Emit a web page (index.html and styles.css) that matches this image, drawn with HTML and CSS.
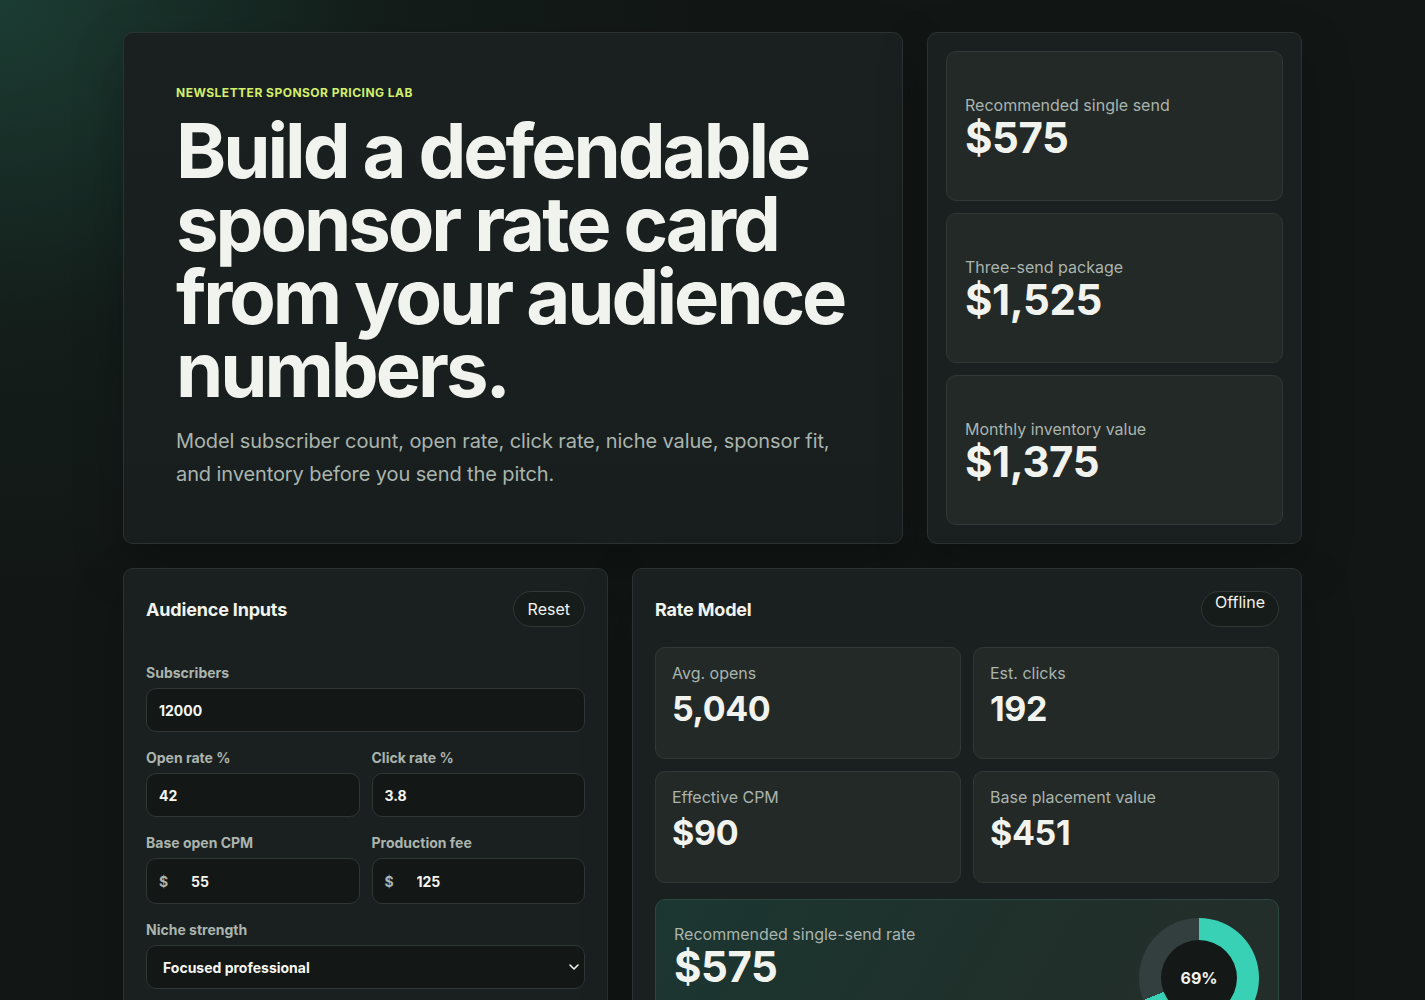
FILE: index.html
```html
<!DOCTYPE html>
<html lang="en">
<head>
<meta charset="utf-8">
<title>Newsletter Sponsor Pricing Lab</title>
<link rel="stylesheet" href="styles.css">
</head>
<body>
<main class="page">
  <section class="top-row">
    <div class="hero card">
      <p class="eyebrow">Newsletter Sponsor Pricing Lab</p>
      <h1 class="hero-title">Build a defendable sponsor rate card from your audience numbers.</h1>
      <p class="hero-copy">Model subscriber count, open rate, click rate, niche value, sponsor fit, and inventory before you send the pitch.</p>
    </div>
    <aside class="summary card">
      <div class="summary-item">
        <span class="summary-label">Recommended single send</span>
        <strong class="summary-value">$575</strong>
      </div>
      <div class="summary-item">
        <span class="summary-label">Three-send package</span>
        <strong class="summary-value">$1,525</strong>
      </div>
      <div class="summary-item">
        <span class="summary-label">Monthly inventory value</span>
        <strong class="summary-value">$1,375</strong>
      </div>
    </aside>
  </section>

  <section class="bottom-row">
    <div class="panel card">
      <div class="panel-head">
        <h2 class="panel-title">Audience Inputs</h2>
        <button class="pill" type="button">Reset</button>
      </div>
      <div class="form">
        <label class="field">
          <span class="field-label">Subscribers</span>
          <input class="input" type="text" value="12000">
        </label>
        <div class="field-row">
          <label class="field">
            <span class="field-label">Open rate %</span>
            <input class="input" type="text" value="42">
          </label>
          <label class="field">
            <span class="field-label">Click rate %</span>
            <input class="input" type="text" value="3.8">
          </label>
        </div>
        <div class="field-row">
          <label class="field">
            <span class="field-label">Base open CPM</span>
            <span class="input prefixed"><span class="prefix">$</span><input class="bare" type="text" value="55"></span>
          </label>
          <label class="field">
            <span class="field-label">Production fee</span>
            <span class="input prefixed"><span class="prefix">$</span><input class="bare" type="text" value="125"></span>
          </label>
        </div>
        <label class="field">
          <span class="field-label">Niche strength</span>
          <select class="input select">
            <option>Focused professional</option>
            <option>General interest</option>
            <option>High-intent B2B</option>
          </select>
        </label>
      </div>
    </div>

    <div class="panel card">
      <div class="panel-head">
        <h2 class="panel-title">Rate Model</h2>
        <span class="pill status">Offline</span>
      </div>
      <div class="metrics">
        <div class="metric">
          <span class="metric-label">Avg. opens</span>
          <strong class="metric-value">5,040</strong>
        </div>
        <div class="metric">
          <span class="metric-label">Est. clicks</span>
          <strong class="metric-value">192</strong>
        </div>
        <div class="metric">
          <span class="metric-label">Effective CPM</span>
          <strong class="metric-value">$90</strong>
        </div>
        <div class="metric">
          <span class="metric-label">Base placement value</span>
          <strong class="metric-value">$451</strong>
        </div>
      </div>
      <div class="result">
        <div class="result-text">
          <span class="result-label">Recommended single-send rate</span>
          <strong class="result-value">$575</strong>
          <p class="result-note">Focused professional audience with strong fit.</p>
        </div>
        <div class="donut" style="--pct: 69%">
          <span class="donut-label">69%</span>
        </div>
      </div>
    </div>
  </section>
</main>
</body>
</html>
```

FILE: styles.css
```css
* { box-sizing: border-box; }

html, body {
  margin: 0;
  min-height: 100%;
}

body {
  font-family: Inter, "Noto Sans", "Liberation Sans", sans-serif;
  color: #f1f3ee;
  background:
    radial-gradient(ellipse 700px 600px at 0 0, rgba(30, 70, 58, 0.8), rgba(22, 40, 35, 0.35) 55%, transparent 100%),
    #121715;
  background-color: #121715;
}

.page {
  width: 1179px;
  margin: 0 auto;
  padding: 32px 0 40px;
  display: flex;
  flex-direction: column;
  gap: 24px;
}

.card {
  background: #1a201f;
  border: 1px solid #2b3331;
  border-radius: 10px;
  box-shadow: 0 20px 50px rgba(0, 0, 0, 0.25);
}

.top-row {
  display: grid;
  grid-template-columns: minmax(0, 1fr) 375px;
  gap: 24px;
}

.hero {
  padding: 52px;
  background: linear-gradient(180deg, #1a201f 0%, #181e1d 100%);
}

.eyebrow {
  margin: 0 0 14px;
  font-size: 12px;
  font-weight: 700;
  letter-spacing: 0.04em;
  text-transform: uppercase;
  color: #d2ef6c;
}

.hero-title {
  margin: 0;
  font-size: 76px;
  line-height: 73px;
  font-weight: 700;
  letter-spacing: -0.04em;
  color: #f1f3ee;
}

.hero-copy {
  margin: 19px 0 0;
  font-size: 20px;
  line-height: 33px;
  letter-spacing: -0.005em;
  color: #aab4ae;
}

.summary {
  padding: 18px;
  display: flex;
  flex-direction: column;
  gap: 12px;
}

.summary-item {
  flex: 1;
  display: flex;
  flex-direction: column;
  justify-content: center;
  padding: 0 18px;
  background: #222927;
  border: 1px solid #2f3835;
  border-radius: 10px;
}

.summary-label {
  font-size: 16px;
  color: #aab4ae;
  line-height: 20px;
}

.summary-value {
  margin-top: 3px;
  font-size: 42px;
  line-height: 40px;
  font-weight: 700;
  letter-spacing: -0.01em;
}

.bottom-row {
  display: grid;
  grid-template-columns: 485px minmax(0, 1fr);
  gap: 24px;
  align-items: start;
}

.panel {
  padding: 22px;
  min-height: 480px;
}

.panel-head {
  display: flex;
  align-items: center;
  justify-content: space-between;
  height: 36px;
  margin-bottom: 37px;
}

.panel-title {
  margin: 0;
  font-size: 18px;
  font-weight: 700;
  letter-spacing: -0.01em;
}

.panel + .panel .panel-head {
  margin-bottom: 20px;
}

.pill {
  height: 36px;
  padding: 0 14px;
  border-radius: 18px;
  border: 1px solid #2f3835;
  background: #161c1a;
  color: #f1f3ee;
  font-family: inherit;
  font-size: 16px;
  display: inline-flex;
  align-items: center;
}

.status {
  align-items: flex-start;
  padding: 0 14px;
  width: 78px;
  justify-content: center;
  font-size: 16px;
  line-height: 20px;
}

.form {
  display: flex;
  flex-direction: column;
  gap: 17px;
}

.field-row {
  display: grid;
  grid-template-columns: minmax(0, 1fr) minmax(0, 1fr);
  gap: 12px;
}

.field {
  display: flex;
  flex-direction: column;
  gap: 7px;
  min-width: 0;
}

.field-label {
  font-size: 14px;
  line-height: 17px;
  font-weight: 700;
  color: #abb4ae;
}

.input {
  height: 44px;
  width: 100%;
  padding: 0 12px;
  background: #131816;
  border: 1px solid #2e3733;
  border-radius: 10px;
  color: #f5f6f2;
  font-family: inherit;
  font-size: 14px;
  font-weight: 700;
  outline: none;
}

.prefixed {
  height: 46px;
  display: flex;
  align-items: center;
}

.prefix {
  flex: none;
  width: 32px;
  color: #abb4ae;
  font-size: 14px;
  font-weight: 700;
}

.bare {
  flex: 1;
  width: 100%;
  min-width: 0;
  border: 0;
  background: transparent;
  color: #f5f6f2;
  font-family: inherit;
  font-size: 14px;
  font-weight: 700;
  outline: none;
  padding: 0;
}

.select {
  appearance: none;
  -webkit-appearance: none;
  padding: 0 32px 0 16px;
  background-image: url("data:image/svg+xml,%3Csvg xmlns='http://www.w3.org/2000/svg' width='10' height='6' viewBox='0 0 10 6'%3E%3Cpath d='M1 1l4 4 4-4' fill='none' stroke='%23f1f3ee' stroke-width='1.6' stroke-linecap='round' stroke-linejoin='round'/%3E%3C/svg%3E");
  background-repeat: no-repeat;
  background-position: right 5px center;
}

.metrics {
  display: grid;
  grid-template-columns: 1fr 1fr;
  gap: 12px;
}

.metric {
  height: 112px;
  padding: 15px 16px;
  background: #222927;
  border: 1px solid #2f3835;
  border-radius: 10px;
  display: flex;
  flex-direction: column;
  gap: 6px;
}

.metric-label {
  font-size: 16px;
  line-height: 20px;
  color: #aab4ae;
}

.metric-value {
  font-size: 34px;
  line-height: 40px;
  font-weight: 700;
  letter-spacing: -0.01em;
}

.result {
  margin-top: 16px;
  padding: 18px;
  display: flex;
  align-items: flex-start;
  justify-content: space-between;
  background: linear-gradient(120deg, #1b3631 0%, #20302b 55%, #242d29 100%);
  border: 1px solid #2a4740;
  border-radius: 10px;
}

.result-text {
  display: flex;
  flex-direction: column;
  padding-top: 6px;
}

.result-label {
  font-size: 16px;
  line-height: 20px;
  color: #aab4ae;
}

.result-value {
  font-size: 42px;
  line-height: 46px;
  font-weight: 700;
  letter-spacing: -0.01em;
}

.result-note {
  margin: 8px 0 0;
  font-size: 16px;
  line-height: 22px;
  color: #aab4ae;
}

.donut {
  flex: none;
  width: 120px;
  height: 120px;
  margin-right: 1px;
  border-radius: 50%;
  background: conic-gradient(#38d1b5 0 var(--pct), #333f3e var(--pct) 100%);
  display: flex;
  align-items: center;
  justify-content: center;
  position: relative;
}

.donut::before {
  content: "";
  position: absolute;
  inset: 22px;
  border-radius: 50%;
  background: #141917;
}

.donut-label {
  position: relative;
  font-size: 16px;
  font-weight: 700;
}
```
